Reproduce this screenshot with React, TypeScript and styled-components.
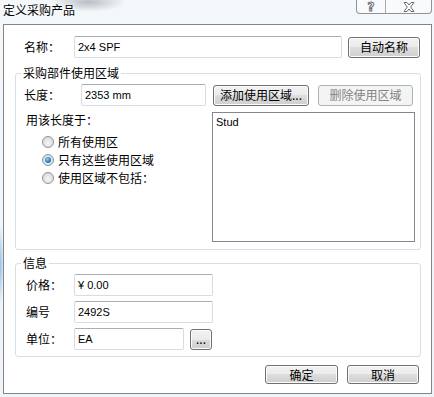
import React from 'react';
import styled, { createGlobalStyle } from 'styled-components';

const GlobalStyle = createGlobalStyle`
  html, body {
    margin: 0;
    padding: 0;
  }
  body {
    width: 434px;
    height: 397px;
    overflow: hidden;
    font-family: "Liberation Sans", "Noto Sans CJK SC", sans-serif;
    font-size: 12px;
    color: #000;
  }
`;

const cjk = `"Noto Sans CJK SC", "Liberation Sans", sans-serif`;
const latin = `"Liberation Sans", "Noto Sans CJK SC", sans-serif`;

const Window = styled.div`
  width: 434px;
  height: 397px;
  display: flex;
  flex-direction: column;
  background:
    radial-gradient(ellipse 38px 10px at 88px 2px, rgba(110, 120, 130, 0.45), transparent),
    radial-gradient(ellipse 4px 40px at 0px 265px, rgba(80, 150, 220, 0.6), transparent),
    linear-gradient(180deg, #f4f8fb 0%, #eef4f8 100%);
`;

const TitleBar = styled.div`
  height: 24px;
  display: flex;
  justify-content: space-between;
  align-items: flex-start;
`;

const Title = styled.div`
  padding: 3px 0 0 3px;
  font-family: ${cjk};
  font-size: 12px;
  line-height: 14px;
  text-shadow: 0 0 6px #fff, 0 0 3px #fff;
`;

const CaptionGroup = styled.div`
  display: flex;
  height: 13px;
  margin-right: 2px;
  border: 1px solid #8c939b;
  border-top: none;
  border-radius: 0 0 4px 4px;
  background: rgba(255, 255, 255, 0.35);
  overflow: hidden;
`;

const CaptionButton = styled.div<{ $w: number; $divider?: boolean }>`
  width: ${p => p.$w}px;
  display: flex;
  align-items: center;
  justify-content: center;
  border-right: ${p => (p.$divider ? '1px solid #a4abb2' : 'none')};
`;

const HelpGlyph = styled.span`
  font-family: "DejaVu Sans", sans-serif;
  font-weight: bold;
  font-size: 12px;
  line-height: 12px;
  color: #fff;
  -webkit-text-stroke: 1px #6a6f75;
`;

const Client = styled.div`
  box-sizing: border-box;
  width: 429px;
  height: 370px;
  margin-left: 3px;
  border: 1px solid #848484;
  background: #fff;
  padding: 11px 10px 0 11px;
  display: flex;
  flex-direction: column;
`;

const Row = styled.div<{ $mt?: number }>`
  display: flex;
  align-items: center;
  height: 22px;
  margin-top: ${p => p.$mt || 0}px;
`;

const Label = styled.div<{ $w: number; $pl?: number }>`
  box-sizing: border-box;
  width: ${p => p.$w}px;
  padding-left: ${p => p.$pl || 0}px;
  font-family: ${cjk};
  font-size: 12px;
  line-height: 14px;
  white-space: nowrap;
`;

const TextBox = styled.div<{ $w: number }>`
  box-sizing: border-box;
  width: ${p => p.$w}px;
  height: 22px;
  border: 1px solid #d9dde3;
  border-top-color: #abadb3;
  border-radius: 2px;
  padding: 0 0 0 3px;
  display: flex;
  align-items: center;
  font-family: ${latin};
  font-size: 11px;
  background: #fff;
`;

const Button = styled.div<{ $w: number; $h?: number; $ml?: number; $disabled?: boolean }>`
  box-sizing: border-box;
  width: ${p => p.$w}px;
  height: ${p => p.$h || 21}px;
  margin-left: ${p => p.$ml || 0}px;
  border: 1px solid ${p => (p.$disabled ? '#adb2b5' : '#707070')};
  border-radius: 3px;
  box-shadow: inset 0 0 0 1px ${p => (p.$disabled ? '#f4f4f4' : '#fcfcfc')};
  background: ${p =>
    p.$disabled
      ? '#f4f4f4'
      : 'linear-gradient(180deg, #f2f2f2 0%, #ebebeb 50%, #dddddd 50%, #cfcfcf 100%)'};
  color: ${p => (p.$disabled ? '#838383' : '#000')};
  display: flex;
  align-items: center;
  justify-content: center;
  font-family: ${cjk};
  font-size: 12px;
  line-height: 14px;
  white-space: nowrap;
`;

const Group = styled.fieldset<{ $mt: number }>`
  box-sizing: border-box;
  margin: ${p => p.$mt}px 0 0 0;
  padding: 0;
  min-width: 0;
  border: 1px solid #d5dfe5;
  border-radius: 3px;
`;

const Legend = styled.legend`
  margin-left: 5px;
  padding: 0 2px;
  font-family: ${cjk};
  font-size: 12px;
  line-height: 14px;
`;

const GroupBody = styled.div<{ $pl: number; $pb: number }>`
  padding: 0 5px ${p => p.$pb}px ${p => p.$pl}px;
`;

const Split = styled.div`
  display: flex;
  margin-top: 6px;
`;

const LeftCol = styled.div`
  width: 188px;
  display: flex;
  flex-direction: column;
`;

const Caption = styled.div`
  padding-left: 2px;
  margin-top: 1px;
  font-family: ${cjk};
  font-size: 12px;
  line-height: 14px;
`;

const RadioList = styled.div`
  display: flex;
  flex-direction: column;
  margin-top: 6px;
  padding-left: 18px;
`;

const RadioRow = styled.div`
  display: flex;
  align-items: center;
  gap: 4px;
  height: 18px;
  font-family: ${cjk};
  font-size: 12px;
  line-height: 14px;
`;

const RadioDot = styled.span<{ $checked?: boolean }>`
  box-sizing: border-box;
  width: 12px;
  height: 12px;
  border-radius: 50%;
  border: 1px solid #8f9396;
  background: radial-gradient(circle at 50% 60%, #f6f6f6 0%, #dcdcdc 70%, #cfcfcf 100%);
  display: flex;
  align-items: center;
  justify-content: center;
  &::after {
    content: '';
    display: ${p => (p.$checked ? 'block' : 'none')};
    width: 6px;
    height: 6px;
    border-radius: 50%;
    background: radial-gradient(circle at 40% 35%, #8fd3ff 0%, #2a8ad4 50%, #0c4f8c 100%);
  }
`;

const ListBox = styled.div`
  box-sizing: border-box;
  width: 203px;
  height: 130px;
  border: 1px solid #828790;
  padding: 3px 0 0 3px;
  font-family: ${latin};
  font-size: 11px;
  line-height: 13px;
`;

const Footer = styled.div`
  display: flex;
  justify-content: flex-end;
  gap: 9px;
  margin-top: 8px;
  padding-right: 2px;
`;

export default function App() {
  return (
    <>
      <GlobalStyle />
      <Window>
        <TitleBar>
          <Title>定义采购产品</Title>
          <CaptionGroup>
            <CaptionButton $w={28} $divider>
              <HelpGlyph>?</HelpGlyph>
            </CaptionButton>
            <CaptionButton $w={45}>
              <svg width="12" height="10" viewBox="0 0 12 10">
                <path
                  d="M1 0.5h3l2 2.5 2-2.5h3l-3.3 4.5 3.3 4.5h-3l-2-2.5-2 2.5h-3l3.3-4.5z"
                  fill="#fff"
                  stroke="#6a6f75"
                  strokeWidth="1"
                  strokeLinejoin="round"
                />
              </svg>
            </CaptionButton>
          </CaptionGroup>
        </TitleBar>

        <Client>
          <Row>
            <Label $w={59} $pl={9}>名称：</Label>
            <TextBox $w={268}>2x4 SPF</TextBox>
            <Button $w={72} $ml={6}>自动名称</Button>
          </Row>

          <Group $mt={8}>
            <Legend>采购部件使用区域</Legend>
            <GroupBody $pl={8} $pb={7}>
              <Row $mt={4}>
                <Label $w={57}>长度：</Label>
                <TextBox $w={125}>2353 mm</TextBox>
                <Button $w={96} $ml={7}>添加使用区域...</Button>
                <Button $w={95} $ml={9} $disabled>删除使用区域</Button>
              </Row>
              <Split>
                <LeftCol>
                  <Caption>用该长度于：</Caption>
                  <RadioList>
                    <RadioRow><RadioDot />所有使用区</RadioRow>
                    <RadioRow><RadioDot $checked />只有这些使用区域</RadioRow>
                    <RadioRow><RadioDot />使用区域不包括：</RadioRow>
                  </RadioList>
                </LeftCol>
                <ListBox>Stud</ListBox>
              </Split>
            </GroupBody>
          </Group>

          <Group $mt={6}>
            <Legend>信息</Legend>
            <GroupBody $pl={10} $pb={6}>
              <Row $mt={4}>
                <Label $w={48}>价格：</Label>
                <TextBox $w={139}>¥ 0.00</TextBox>
              </Row>
              <Row $mt={5}>
                <Label $w={48}>编号</Label>
                <TextBox $w={139}>2492S</TextBox>
              </Row>
              <Row $mt={5}>
                <Label $w={48}>单位：</Label>
                <TextBox $w={110}>EA</TextBox>
                <Button $w={22} $ml={6}>...</Button>
              </Row>
            </GroupBody>
          </Group>

          <Footer>
            <Button $w={73} $h={19}>确定</Button>
            <Button $w={72} $h={19}>取消</Button>
          </Footer>
        </Client>
      </Window>
    </>
  );
}
